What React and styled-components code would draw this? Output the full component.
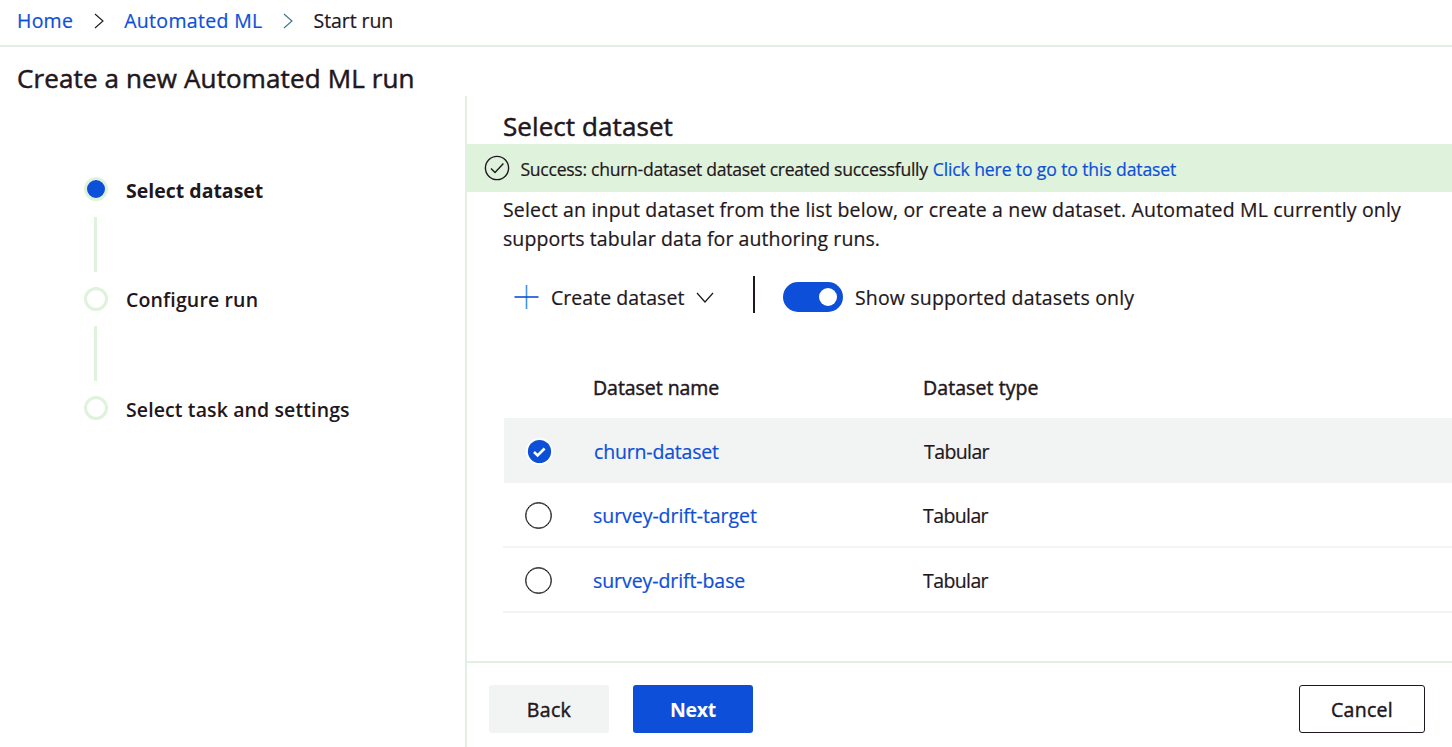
import React from "react";
import styled, { createGlobalStyle } from "styled-components";

const blue = "#0d4fd8";
const ink = "#1f1720";
const mint = "#dff2dc";
const mist = "#f2f4f3";

const GlobalStyle = createGlobalStyle`
  * { box-sizing: border-box; }
  body {
    margin: 0;
    background: #fff;
    color: ${ink};
    font-family: "Open Sans", "Noto Sans", sans-serif;
    font-size: 20px;
    overflow: hidden;
  }
`;

const Page = styled.div`
  display: flex;
  flex-direction: column;
  width: 1452px;
  height: 747px;
`;

const Text = styled.span`
  display: inline-block;
  white-space: nowrap;
  font-size: ${(p) => p.$size || 19.5}px;
  font-weight: ${(p) => p.$weight || 400};
  letter-spacing: ${(p) => p.$track || 0}px;
  color: ${(p) => p.$color || "inherit"};
  -webkit-text-stroke: ${(p) => p.$stroke ?? 0.2}px currentColor;
`;

const Link = styled(Text).attrs({ as: "a" })`
  color: ${blue};
  cursor: pointer;
`;

const Breadcrumb = styled.nav`
  display: flex;
  align-items: center;
  height: 47px;
  padding: 0 0 4px 17px;
  border-bottom: 2px solid #e6efe5;
`;

const Separator = styled.svg`
  width: 10px;
  height: 16px;
  margin: 0 20.5px 0 20.5px;
  fill: none;
  stroke: ${(p) => p.$color || ink};
  stroke-width: 1.1;
`;

const PageTitle = styled.h1`
  display: flex;
  align-items: center;
  height: 49px;
  margin: 0;
  padding: 12px 0 0 17px;
`;

const Body = styled.div`
  display: flex;
  flex: 1;
  min-height: 0;
`;

const Sidebar = styled.aside`
  width: 465px;
  padding: 81px 0 0 84px;
`;

const Step = styled.div`
  display: flex;
  align-items: center;
  gap: 18px;
  height: 24px;
`;

const StepLabel = styled(Text)`
  padding-top: 2px;
`;

const StepDot = styled.span`
  width: 24px;
  height: 24px;
  border: 3px solid ${mint};
  border-radius: 50%;
  background: ${(p) => (p.$active ? blue : "#fff")};
`;

const Connector = styled.div`
  width: 3px;
  height: 55px;
  margin: 15.5px 0 15px 10px;
  background: ${mint};
`;

const Main = styled.main`
  display: flex;
  flex: 1;
  flex-direction: column;
  min-width: 0;
  border-left: 2px solid #e4efe3;
`;

const SectionTitle = styled.h2`
  display: flex;
  align-items: center;
  height: 48px;
  margin: 0;
  padding: 12px 0 0 36px;
`;

const Banner = styled.div`
  display: flex;
  align-items: center;
  height: 48px;
  padding-left: 16.5px;
  background: ${mint};
`;

const BannerText = styled.p`
  display: flex;
  gap: 5px;
  margin: 0;
  padding-top: 2px;
`;

const BannerIcon = styled.svg`
  width: 26px;
  height: 26px;
  margin-right: 11px;
  fill: none;
  stroke: ${ink};
  stroke-width: 1.4;
`;

const Intro = styled.p`
  display: flex;
  flex-direction: column;
  margin: 0;
  padding: 3px 0 0 36px;
  line-height: 29px;
`;

const Toolbar = styled.div`
  display: flex;
  align-items: flex-end;
  height: 37px;
  margin-top: 23px;
  padding-left: 47px;
`;

const CreateButton = styled.button`
  display: flex;
  align-items: center;
  height: 32px;
  padding: 0;
  border: 0;
  background: none;
  color: inherit;
  font: inherit;
`;

const PlusIcon = styled.svg`
  width: 25px;
  height: 24px;
  margin-right: 12px;
  stroke: ${blue};
  stroke-width: 1.6;
`;

const ChevronIcon = styled.svg`
  width: 18px;
  height: 11px;
  margin-left: 12px;
  fill: none;
  stroke: ${ink};
  stroke-width: 1.2;
`;

const Divider = styled.span`
  width: 2px;
  height: 37px;
  margin: 0 28px 0 39px;
  background: ${ink};
`;

const ToggleField = styled.label`
  display: flex;
  align-items: center;
  height: 32px;
`;

const Toggle = styled.span`
  display: flex;
  align-items: center;
  justify-content: flex-end;
  width: 60px;
  height: 30px;
  margin-right: 11.5px;
  padding-right: 6px;
  border-radius: 15px;
  background: ${blue};
`;

const Knob = styled.span`
  width: 18px;
  height: 18px;
  border-radius: 50%;
  background: #fff;
`;

const Table = styled.div`
  display: flex;
  flex-direction: column;
  margin: 44px 0 0 36px;
`;

const Row = styled.div`
  display: grid;
  grid-template-columns: 90px 330px 1fr;
  align-items: center;
  height: ${(p) => p.$height}px;
  margin-left: ${(p) => (p.$selected ? 1 : 0)}px;
  padding-top: ${(p) => (p.$line || p.$selected ? 2 : 0)}px;
  padding-bottom: ${(p) => (p.$line || p.$selected ? 0 : 1)}px;
  border-bottom: ${(p) => (p.$line ? "2px solid #f3f5f4" : "0")};
  background: ${(p) => (p.$selected ? mist : "transparent")};
`;

const Radio = styled.span`
  width: 27px;
  height: 27px;
  margin-left: 22px;
  border: 1.5px solid ${ink};
  border-radius: 50%;
  box-shadow: inset 0 0 0 0.4px ${ink};
`;

const CheckedIcon = styled.svg`
  width: 27px;
  height: 27px;
  margin-left: 22px;
`;

const Footer = styled.footer`
  display: flex;
  align-items: flex-start;
  gap: 24px;
  height: 86px;
  margin-top: auto;
  padding: 22px 27px 0 22px;
  border-top: 2px solid #e2f1df;
`;

const Button = styled.button`
  display: flex;
  align-items: center;
  justify-content: center;
  width: ${(p) => p.$width || 120}px;
  height: 48px;
  margin-left: ${(p) => (p.$end ? "auto" : "0")};
  padding: 1px 0 0;
  border: ${(p) => (p.$outlined ? `1.5px solid ${ink}` : "0")};
  border-radius: 3px;
  background: ${(p) => p.$fill || "#fff"};
  color: ${(p) => p.$ink || ink};
  font: inherit;
`;

const steps = [
  { label: "Select dataset", active: true, weight: 700, track: 0 },
  { label: "Configure run", weight: 600, track: 0.15 },
  { label: "Select task and settings", weight: 600, track: 0.11 },
];

const datasets = [
  { name: "churn-dataset", selected: true, track: -0.18 },
  { name: "survey-drift-target", track: -0.05 },
  { name: "survey-drift-base", track: -0.08 },
];

export default function App() {
  return (
    <Page>
      <GlobalStyle />
      <Breadcrumb>
        <Link $track={0.25}>Home</Link>
        <Separator viewBox="0 0 10 16"><path d="M1 1l8 7-8 7" /></Separator>
        <Link $track={0.33}>Automated ML</Link>
        <Separator viewBox="0 0 10 16" $color="#3c7585"><path d="M1 1l8 7-8 7" /></Separator>
        <Text $track={-0.08}>Start run</Text>
      </Breadcrumb>
      <PageTitle>
        <Text $size={26} $track={0.13} $stroke={0.5}>Create a new Automated ML run</Text>
      </PageTitle>
      <Body>
        <Sidebar>
          {steps.map((s, i) => (
            <React.Fragment key={s.label}>
              {i > 0 && <Connector />}
              <Step>
                <StepDot $active={s.active} />
                <StepLabel $weight={s.weight} $track={s.track} $stroke={0}>{s.label}</StepLabel>
              </Step>
            </React.Fragment>
          ))}
        </Sidebar>
        <Main>
          <SectionTitle>
            <Text $size={26} $track={0.08} $stroke={0.5}>Select dataset</Text>
          </SectionTitle>
          <Banner>
            <BannerIcon viewBox="0 0 26 26">
              <circle cx="13" cy="13" r="11.6" />
              <path d="M7 13.4l4 4 8.4-8.8" />
            </BannerIcon>
            <BannerText>
              <Text $size={17.6} $track={-0.29}>Success: churn-dataset dataset created successfully</Text>
              <Link $size={17.6} $track={-0.13}>Click here to go to this dataset</Link>
            </BannerText>
          </Banner>
          <Intro>
            <Text $track={0.175}>
              Select an input dataset from the list below, or create a new dataset. Automated ML currently only
            </Text>
            <Text $track={0.08}>supports tabular data for authoring runs.</Text>
          </Intro>
          <Toolbar>
            <CreateButton>
              <PlusIcon viewBox="0 0 25 24">
                <path d="M12.5 0v24" stroke="#3f94e8" />
                <path d="M0.5 12h24" />
              </PlusIcon>
              <Text $track={0.05}>Create dataset</Text>
              <ChevronIcon viewBox="0 0 18 11"><path d="M1 1l8 9 8-9" /></ChevronIcon>
            </CreateButton>
            <Divider />
            <ToggleField>
              <Toggle><Knob /></Toggle>
              <Text $track={0.16}>Show supported datasets only</Text>
            </ToggleField>
          </Toolbar>
          <Table>
            <Row $height={61}>
              <span />
              <Text $stroke={0.45} $track={-0.05}>Dataset name</Text>
              <Text $stroke={0.45} $track={0.08}>Dataset type</Text>
            </Row>
            {datasets.map((d) => (
              <Row key={d.name} $height={65} $selected={d.selected} $line={!d.selected}>
                {d.selected ? (
                  <CheckedIcon viewBox="0 0 27 27">
                    <circle cx="13.5" cy="13.5" r="13.5" fill="#fff" />
                    <circle cx="13.5" cy="13.5" r="11.6" fill={blue} />
                    <path d="M8 14l3.6 3.5 7-7" fill="none" stroke="#fff" strokeWidth="2.6" />
                  </CheckedIcon>
                ) : (
                  <Radio />
                )}
                <span><Link $track={d.track}>{d.name}</Link></span>
                <Text $track={-0.6}>Tabular</Text>
              </Row>
            ))}
          </Table>
          <Footer>
            <Button $fill={mist}><Text $stroke={0.45} $track={0.35}>Back</Text></Button>
            <Button $fill={blue} $ink="#fff"><Text $weight={700} $stroke={0} $track={-0.3}>Next</Text></Button>
            <Button $width={126} $outlined $end><Text $stroke={0.45} $track={0.3}>Cancel</Text></Button>
          </Footer>
        </Main>
      </Body>
    </Page>
  );
}
